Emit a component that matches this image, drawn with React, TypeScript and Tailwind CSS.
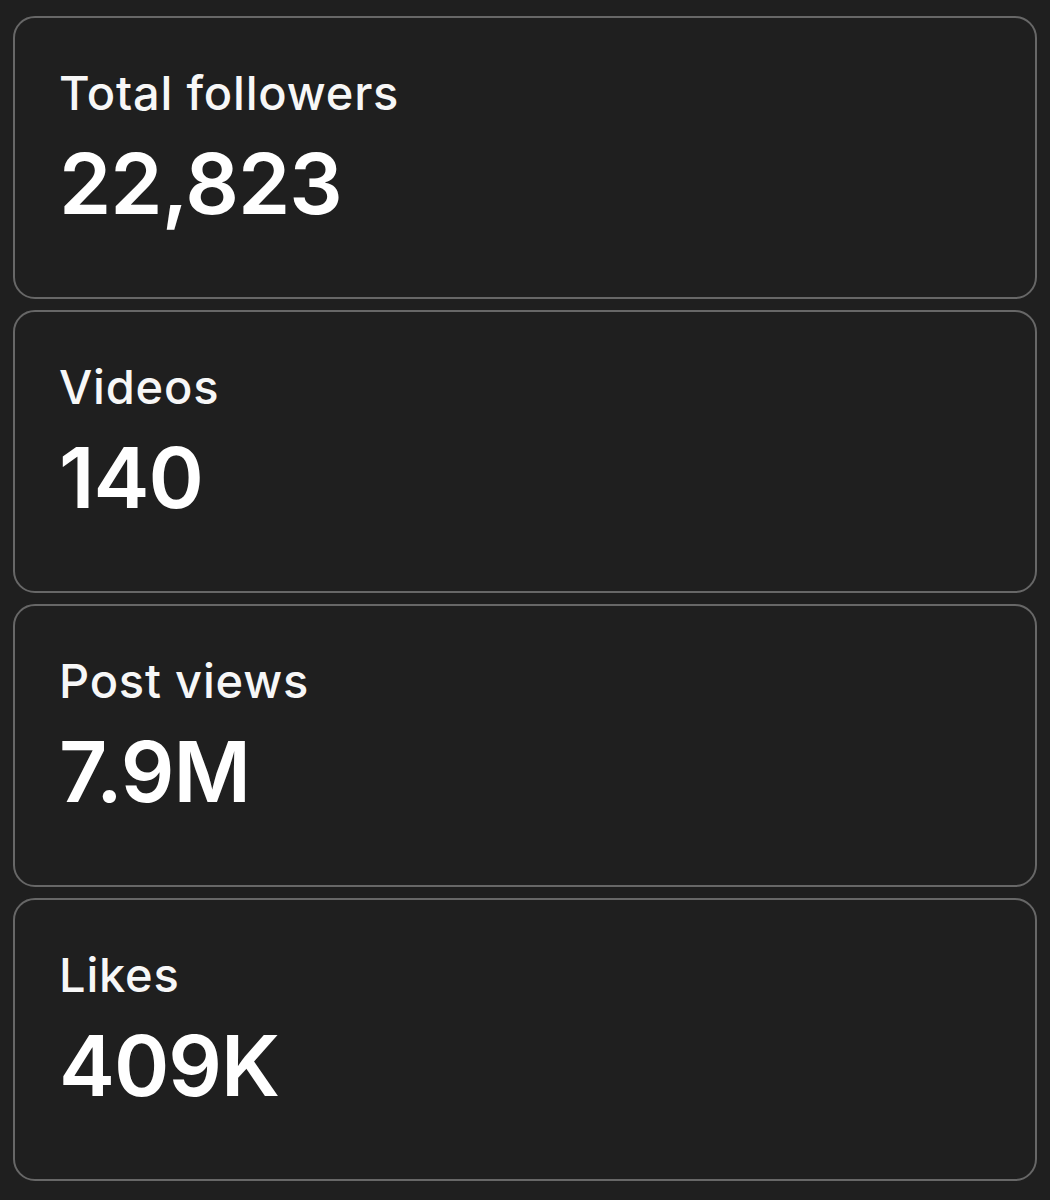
const stats = [
  { label: 'Total followers', value: '22,823' },
  { label: 'Videos', value: '140' },
  { label: 'Post views', value: '7.9M' },
  { label: 'Likes', value: '409K' },
]

function StatCard({ label, value }: { label: string; value: string }) {
  return (
    <div className="h-[283px] border-2 border-[#676767] rounded-[22px] bg-[#1f1f1f] pl-[44px] pt-[51px] flex flex-col gap-[26px]">
      <div className="text-[47px] leading-none text-[#f7f7f7] font-medium tracking-[0.8px]">{label}</div>
      <div className="text-[84px] leading-none text-white font-semibold tracking-[-1px]">{value}</div>
    </div>
  )
}

export default function App() {
  return (
    <div
      className="min-h-[1200px] bg-[#1f1f1f] px-[13px] pt-[16px] pb-[19px] flex flex-col gap-[11px]"
      style={{ fontFamily: 'Inter, "Noto Sans", sans-serif' }}
    >
      {stats.map((s) => (
        <StatCard key={s.label} label={s.label} value={s.value} />
      ))}
    </div>
  )
}
